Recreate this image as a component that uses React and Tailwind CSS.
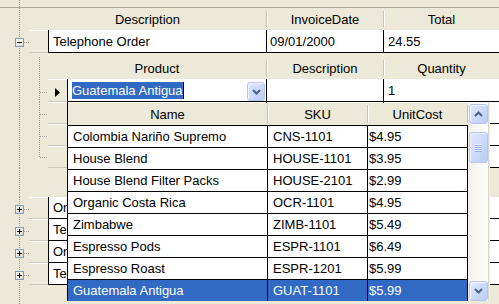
import React, { useId } from "react";

const DOT = "1 1";

function OuterGutter({ h, box, c = 12 }) {
  const id = useId();
  return (
    <svg width="29" height={h} className="block shrink-0">
      <defs>
        <linearGradient id={id} x1="0" y1="0" x2="1" y2="1">
          <stop offset="0" stopColor="#ffffff" />
          <stop offset="1" stopColor="#d8d6c8" />
        </linearGradient>
      </defs>
      <line x1="19.5" y1="0" x2="19.5" y2={h} stroke="#9f9f9f" strokeDasharray={DOT} />
      {box && (
        <>
          <line x1="24" y1={c + 0.5} x2="29" y2={c + 0.5} stroke="#9f9f9f" strokeDasharray={DOT} />
          <rect x="15.5" y={c - 3.5} width="8" height="8" fill={`url(#${id})`} stroke="#7f9db9" />
          <line x1="17" y1={c + 0.5} x2="22" y2={c + 0.5} stroke="#000" />
          {box === "plus" && <line x1="19.5" y1={c - 2} x2="19.5" y2={c + 3} stroke="#000" />}
        </>
      )}
    </svg>
  );
}

function InnerGutter({ h, c, end }) {
  return (
    <svg width="19" height={h} className="block shrink-0">
      <line x1="10.5" y1="0" x2="10.5" y2={end ? c + 1 : h} stroke="#9f9f9f" strokeDasharray={DOT} />
      {c != null && <line x1="11" y1={c + 0.5} x2="19" y2={c + 0.5} stroke="#9f9f9f" strokeDasharray={DOT} />}
    </svg>
  );
}

function Sep({ h = "h-[16px]" }) {
  return <div className={`w-px shrink-0 ${h} bg-[#c7c4b3] shadow-[1px_0_0_#ffffff]`} />;
}

function RowHead({ children }) {
  return (
    <div className="flex w-[19px] shrink-0 items-center bg-[#ECE9D8] shadow-[inset_0_1px_0_#ffffff,inset_0_-1px_0_#cbc7b7]">
      {children}
    </div>
  );
}

function Chevron({ up }) {
  return (
    <svg width="9" height="6" className="block">
      <polyline
        points={up ? "1,5 4.5,1.5 8,5" : "1,1 4.5,4.5 8,1"}
        fill="none"
        stroke="#4d6185"
        strokeWidth="2"
      />
    </svg>
  );
}

function XpButton({ className = "", children }) {
  return (
    <div
      className={`flex items-center justify-center rounded-[3px] border border-[#b3c6f4] bg-gradient-to-br from-[#dfe8fe] to-[#b9cdf9] shadow-[inset_1px_1px_0_#f2f6ff] ${className}`}
    >
      {children}
    </div>
  );
}

function OuterRow({ desc, date, total, box = "plus", h = "h-[22px]", gh = 22 }) {
  return (
    <div className={`flex ${h}`}>
      <OuterGutter h={gh} box={box} />
      <RowHead />
      <div className="flex flex-1 border-b border-black bg-white">
        <div className="flex w-[218px] items-center overflow-hidden whitespace-nowrap border-l border-black pl-[4px]">{desc}</div>
        <div className="flex w-[117px] items-center overflow-hidden whitespace-nowrap border-l border-black pl-[3px]">{date}</div>
        <div className="flex flex-1 items-center overflow-hidden whitespace-nowrap border-l border-black pl-[4px]">{total}</div>
      </div>
    </div>
  );
}

function ChildRow({ c, end }) {
  return (
    <div className="flex h-[22px]">
      <InnerGutter h={22} c={c} end={end} />
      <RowHead />
      <div className="flex flex-1 border-b border-black bg-white">
        <div className="w-[199px] border-l border-black" />
        <div className="w-[117px] border-l border-black" />
        <div className="flex-1 border-l border-black" />
      </div>
    </div>
  );
}

const products = [
  ["Colombia Nariño Supremo", "CNS-1101", "$4.95"],
  ["House Blend", "HOUSE-1101", "$3.95"],
  ["House Blend Filter Packs", "HOUSE-2101", "$2.99"],
  ["Organic Costa Rica", "OCR-1101", "$4.95"],
  ["Zimbabwe", "ZIMB-1101", "$5.49"],
  ["Espresso Pods", "ESPR-1101", "$6.49"],
  ["Espresso Roast", "ESPR-1201", "$5.99"],
  ["Guatemala Antigua", "GUAT-1101", "$5.99"],
];

function Dropdown() {
  return (
    <div className="absolute left-[67px] top-[103px] flex h-[198px] w-[423px] border-l border-black bg-white">
      <div className="flex w-[400px] flex-col">
        <div className="flex h-[22px] shrink-0 items-center bg-[#ECE9D8]">
          <div className="w-[199px] text-center">Name</div>
          <Sep h="h-[18px]" />
          <div className="w-[99px] text-center">SKU</div>
          <Sep h="h-[18px]" />
          <div className="w-[99px] text-center">UnitCost</div>
          <Sep h="h-[18px]" />
        </div>
        {products.map(([name, sku, cost], i) => {
          const sel = i === products.length - 1;
          return (
            <div
              key={sku}
              className={`flex h-[22px] shrink-0 border-t border-black ${sel ? "bg-[#316AC5] text-white" : ""}`}
            >
              <div className="flex w-[199px] items-center whitespace-nowrap pl-[5px]">{name}</div>
              <div className="flex w-[100px] items-center whitespace-nowrap border-l border-black pl-[5px]">{sku}</div>
              <div className="flex w-[101px] items-center whitespace-nowrap border-x border-black pl-[1px]">{cost}</div>
            </div>
          );
        })}
      </div>
      <div className="flex w-[20px] flex-col bg-gradient-to-r from-[#f3f1ec] to-[#fefefb] pl-px pt-px">
        <XpButton className="h-[20px] w-[19px]">
          <Chevron up />
        </XpButton>
        <XpButton className="mt-[8px] h-[31px] w-[19px]">
          <svg width="7" height="8" className="block">
            <line x1="0" y1="0.5" x2="7" y2="0.5" stroke="#eef4fe" />
            <line x1="0" y1="1.5" x2="7" y2="1.5" stroke="#8cb0f8" />
            <line x1="0" y1="2.5" x2="7" y2="2.5" stroke="#eef4fe" />
            <line x1="0" y1="3.5" x2="7" y2="3.5" stroke="#8cb0f8" />
            <line x1="0" y1="4.5" x2="7" y2="4.5" stroke="#eef4fe" />
            <line x1="0" y1="5.5" x2="7" y2="5.5" stroke="#8cb0f8" />
            <line x1="0" y1="6.5" x2="7" y2="6.5" stroke="#eef4fe" />
            <line x1="0" y1="7.5" x2="7" y2="7.5" stroke="#8cb0f8" />
          </svg>
        </XpButton>
        <div className="flex-1" />
        <XpButton className="h-[20px] w-[19px]">
          <Chevron />
        </XpButton>
      </div>
      <div className="w-[2px] border-l border-[#d9d6cb] bg-[#f1efe8]" />
    </div>
  );
}

export default function App() {
  return (
    <div className="relative h-[304px] w-[499px] overflow-hidden bg-[#ECE9D8] font-['Liberation_Sans',Arial,sans-serif] text-[13px] leading-[15px] text-black">
      <div className="flex h-[8px] border-b border-[#aca899]">
        <OuterGutter h={7} />
      </div>

      <div className="flex h-[22px] items-center">
        <OuterGutter h={22} />
        <div className="w-[237px] text-center">Description</div>
        <Sep />
        <div className="w-[116px] text-center">InvoiceDate</div>
        <Sep />
        <div className="flex-1 text-center">Total</div>
      </div>

      <OuterRow desc="Telephone Order" date="09/01/2000" total="24.55" box="minus" h="h-[23px]" gh={23} />

      <div className="flex">
        <OuterGutter h={115} />
        <div className="flex flex-1 flex-col">
          <div className="flex h-[26px] items-center pt-[4px]">
            <InnerGutter h={22} />
            <div className="w-[218px] text-center">Product</div>
            <Sep />
            <div className="w-[116px] text-center">Description</div>
            <Sep />
            <div className="flex-1 text-center">Quantity</div>
          </div>
          <div className="flex h-[23px]">
            <InnerGutter h={23} c={13} />
            <RowHead>
              <svg width="5" height="9" className="ml-[7px] mt-[3px] block">
                <polygon points="0,0 5,4.5 0,9" fill="#000" />
              </svg>
            </RowHead>
            <div className="flex flex-1 border-b border-black bg-white">
              <div className="flex w-[199px] items-center border-l border-black pl-[4px]">
                <span className="whitespace-nowrap bg-[#316AC5] leading-[17px] text-white">Guatemala Antigua</span>
                <div className="h-[17px] w-px bg-black" />
                <div className="flex-1" />
                <XpButton className="mr-px h-[19px] w-[18px] self-end">
                  <Chevron />
                </XpButton>
              </div>
              <div className="w-[117px] border-l border-black" />
              <div className="flex flex-1 items-center border-l border-black pl-[4px]">1</div>
            </div>
          </div>
          <ChildRow c={12} />
          <ChildRow c={12} />
          <ChildRow c={11} end />
        </div>
      </div>

      <div className="flex h-[29px]">
        <OuterGutter h={29} />
      </div>

      {/* rows under the open list: only the first letters show */}
      <OuterRow desc="Or" />
      <OuterRow desc="Te" />
      <OuterRow desc="Or" />
      <OuterRow desc="Te" />

      <div className="flex h-[19px]">
        <OuterGutter h={19} />
      </div>

      <Dropdown />
    </div>
  );
}
